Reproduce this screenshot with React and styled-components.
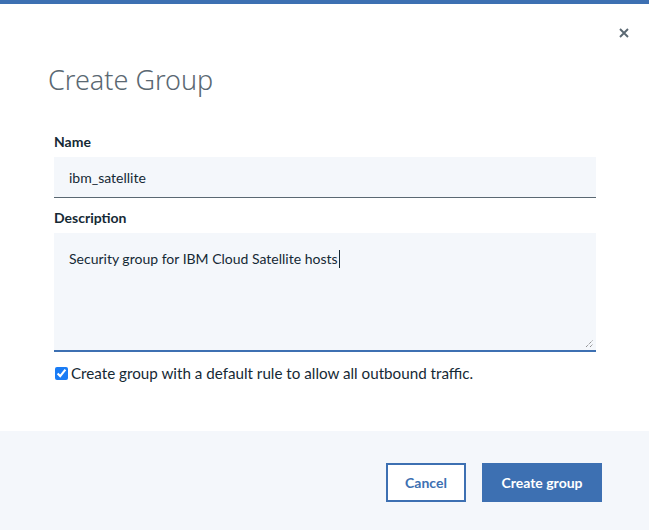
import styled, { createGlobalStyle } from "styled-components";

const GlobalStyle = createGlobalStyle`
    html, body {
        margin: 0;
        padding: 0;
        background: #ffffff;
    }
    body {
        font-family: Lato, "Noto Sans", sans-serif;
        color: #152935;
    }
`;

export default function App() {
    return (
        <>
            <GlobalStyle />
            <Modal>
                <Header>
                    <Title>Create Group</Title>
                    <CloseButton aria-label="Close">
                        <svg width="10" height="10" viewBox="0 0 10 10">
                            <path d="M1 1 L9 9 M9 1 L1 9" stroke="#5a6872" strokeWidth="1.9" />
                        </svg>
                    </CloseButton>
                </Header>
                <Body>
                    <Field>
                        <Label>Name</Label>
                        <TextInput role="textbox">ibm_satellite</TextInput>
                    </Field>
                    <Field>
                        <Label>Description</Label>
                        <TextArea role="textbox">
                            Security group for IBM Cloud Satellite hosts<Caret />
                            <Grip width="9" height="9" viewBox="0 0 9 9">
                                <path d="M1 8 L8 1 M5 8 L8 5" stroke="#666" strokeWidth="1" strokeDasharray="1 1" />
                            </Grip>
                        </TextArea>
                    </Field>
                    <CheckRow>
                        <Check type="checkbox" defaultChecked />
                        Create group with a default rule to allow all outbound traffic.
                    </CheckRow>
                </Body>
                <Footer>
                    <Button kind="secondary">Cancel</Button>
                    <Button kind="primary">Create group</Button>
                </Footer>
            </Modal>
        </>
    );
}

const Modal = styled.div`
    display: flex;
    flex-direction: column;
    min-height: 100vh;
    box-sizing: border-box;
    border-top: 4px solid #3d70b2;
    background: #ffffff;
`;

const Header = styled.div`
    position: relative;
    padding: 60px 54px 0 48px;
`;

const Title = styled.h2`
    margin: 0;
    font-family: "Noto Sans", sans-serif;
    font-size: 27px;
    line-height: 32px;
    font-weight: 300;
    color: #5a6872;
`;

const CloseButton = styled.button`
    position: absolute;
    top: 16px;
    right: 12px;
    width: 26px;
    height: 26px;
    padding: 0;
    border: none;
    background: transparent;
    display: flex;
    align-items: center;
    justify-content: center;
    cursor: pointer;
`;

const Body = styled.div`
    display: flex;
    flex-direction: column;
    gap: 12px;
    padding: 38px 53px 0 54px;
`;

const Field = styled.div`
    display: flex;
    flex-direction: column;
    gap: 7px;
`;

const Label = styled.label`
    font-size: 14px;
    line-height: 16px;
    font-weight: 700;
    color: #152935;
`;

const TextInput = styled.div`
    display: flex;
    align-items: center;
    height: 41px;
    box-sizing: border-box;
    padding: 0 15px;
    border-bottom: 1px solid #5a6872;
    background: #f4f7fb;
    font-size: 14px;
    color: #152935;
`;

const TextArea = styled.div`
    position: relative;
    height: 119px;
    box-sizing: border-box;
    padding: 16px 15px;
    border-bottom: 2px solid #3d70b2;
    background: #f4f7fb;
    font-size: 14px;
    line-height: 20px;
    color: #152935;
`;

const Caret = styled.span`
    display: inline-block;
    width: 1px;
    height: 18px;
    margin-left: 1px;
    background: #152935;
    vertical-align: -4px;
`;

const Grip = styled.svg`
    position: absolute;
    right: 2px;
    bottom: 2px;
`;

const CheckRow = styled.label`
    display: flex;
    align-items: center;
    gap: 3px;
    font-size: 15.2px;
    line-height: 18px;
    color: #152935;
`;

const Check = styled.input`
    width: 13px;
    height: 13px;
    margin: 0 0 0 1px;
    accent-color: #1a7cf5;
`;

const Footer = styled.div`
    flex: 1;
    display: flex;
    justify-content: flex-end;
    align-items: flex-start;
    gap: 16px;
    padding: 32px 47px 0 0;
    margin-top: 49px;
    background: #f4f7fb;
`;

const Button = styled.button`
    height: 39px;
    box-sizing: border-box;
    padding: 0 16px;
    font-family: inherit;
    font-size: 14px;
    font-weight: 700;
    cursor: pointer;
    border: 2px solid #3d70b2;
    color: ${p => (p.kind === "primary" ? "#ffffff" : "#3d70b2")};
    background: ${p => (p.kind === "primary" ? "#3d70b2" : "#ffffff")};
    min-width: ${p => (p.kind === "primary" ? "120px" : "80px")};
`;
